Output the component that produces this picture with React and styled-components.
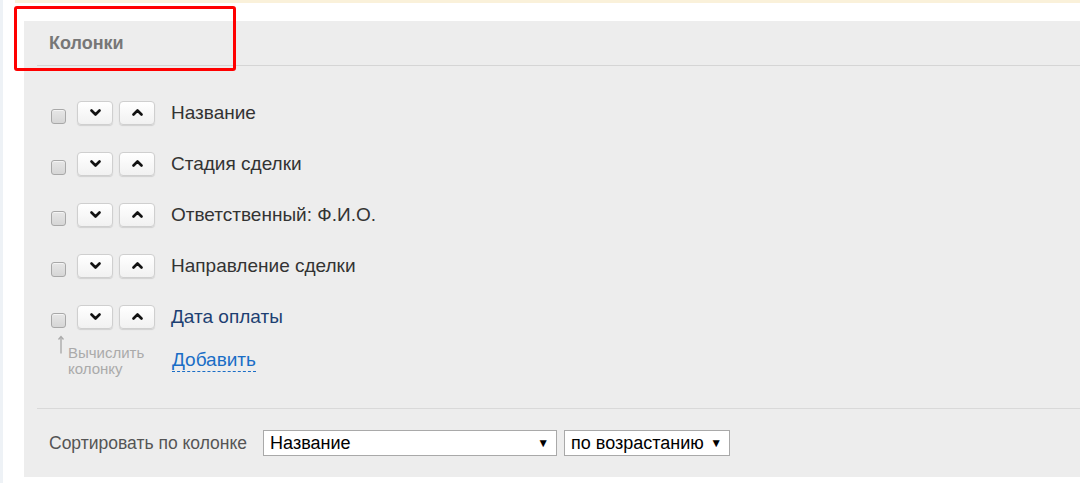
import styled, { createGlobalStyle } from "styled-components";

const GlobalStyle = createGlobalStyle`
  html, body {
    margin: 0;
    padding: 0;
    background: #fff;
    font-family: "Liberation Sans", Arial, sans-serif;
  }
`;

const columns = [
  { title: "Название" },
  { title: "Стадия сделки" },
  { title: "Ответственный: Ф.И.О." },
  { title: "Направление сделки" },
  { title: "Дата оплаты", custom: true },
];

function Chevron({ up }) {
  return (
    <svg width="11" height="7" viewBox="0 0 11 7">
      <polyline
        points={up ? "1.5,5.5 5.5,1.5 9.5,5.5" : "1.5,1.5 5.5,5.5 9.5,1.5"}
        fill="none"
        stroke="#111"
        strokeWidth="2.6"
        strokeLinecap="round"
        strokeLinejoin="round"
      />
    </svg>
  );
}

export default function App() {
  return (
    <Page>
      <GlobalStyle />
      <LeftStrip />
      <Main>
        <NoticeBand />
        <Panel>
          <Header>Колонки</Header>
          <Rows>
            {columns.map((c) => (
              <Row key={c.title}>
                <Check />
                <MoveButton>
                  <Chevron />
                </MoveButton>
                <MoveButton>
                  <Chevron up />
                </MoveButton>
                <ColumnTitle $custom={c.custom}>{c.title}</ColumnTitle>
              </Row>
            ))}
            <Extra>
              <CalcHint>
                <svg width="8" height="19" viewBox="0 0 8 19">
                  <path d="M4 2 V18.5" stroke="#aaa" strokeWidth="1.4" fill="none" />
                  <path d="M1.5 4.5 L4 1.5 L6.5 4.5" stroke="#aaa" strokeWidth="1.3" fill="none" />
                </svg>
                <HintText>
                  Вычислить
                  <br />
                  колонку
                </HintText>
              </CalcHint>
              <AddLink>Добавить</AddLink>
            </Extra>
          </Rows>
          <SortRow>
            <SortLabel>Сортировать по колонке</SortLabel>
            <Select $w={294}>
              <span>Название</span>
              <Arrow>▼</Arrow>
            </Select>
            <Select $w={166}>
              <span>по возрастанию</span>
              <Arrow>▼</Arrow>
            </Select>
          </SortRow>
        </Panel>
      </Main>
      <Annotation />
    </Page>
  );
}

const Page = styled.div`
  position: relative;
  display: flex;
  width: 1080px;
  height: 483px;
  overflow: hidden;
`;

const LeftStrip = styled.div`
  width: 3px;
  flex-shrink: 0;
  background: #eef2f6;
`;

const Main = styled.div`
  flex: 1;
  display: flex;
  flex-direction: column;
`;

const NoticeBand = styled.div`
  height: 3px;
  margin-left: 12px;
  background: #faf1da;
`;

const Panel = styled.div`
  margin: 18px 0 0 21px;
  height: 456px;
  background: #ededed;
  padding-left: 13px;
  display: flex;
  flex-direction: column;
`;

const Header = styled.div`
  height: 45px;
  padding: 1px 0 0 12px;
  box-sizing: border-box;
  border-bottom: 1px solid #d5d5d5;
  display: flex;
  align-items: center;
  font-size: 18px;
  font-weight: bold;
  color: #777;
`;

const Rows = styled.div`
  padding: 21px 0 0 14px;
  border-bottom: 1px solid #d9d9d9;
`;

const Row = styled.div`
  height: 51px;
  display: flex;
  align-items: center;
`;

const Check = styled.span`
  width: 13px;
  height: 13px;
  margin: 8px 11px 0 0;
  border: 1px solid #a8a8a8;
  border-radius: 3px;
  background: linear-gradient(#e6e6e6, #d6d6d6);
  box-shadow: inset 0 1px 0 #f4f4f4;
`;

const MoveButton = styled.span`
  width: 34px;
  height: 22px;
  margin-right: 6px;
  border: 1px solid #cfcfcf;
  border-radius: 4px;
  background: linear-gradient(#ffffff, #f1f1f1);
  box-shadow: 0 1px 1px rgba(0, 0, 0, 0.12);
  display: flex;
  align-items: center;
  justify-content: center;

  & + & {
    margin-right: 16px;
  }
`;

const ColumnTitle = styled.span`
  font-size: 19px;
  color: ${(p) => (p.$custom ? "#1d3f72" : "#333")};
`;

const Extra = styled.div`
  margin-top: -7px;
  height: 73px;
  display: flex;
  align-items: flex-start;
`;

const CalcHint = styled.div`
  box-sizing: border-box;
  width: 121px;
  padding-left: 6px;
  display: flex;
  align-items: flex-start;
  gap: 3px;
`;

const HintText = styled.div`
  margin-top: 10px;
  font-size: 15px;
  line-height: 16px;
  color: #aaa;
`;

const AddLink = styled.span`
  margin-top: 14px;
  font-size: 19px;
  line-height: 22px;
  color: #1a6dc6;
  border-bottom: 1px dashed #1a6dc6;
`;

const SortRow = styled.div`
  flex: 1;
  padding: 0 0 0 12px;
  display: flex;
  align-items: center;
  gap: 7px;
`;

const SortLabel = styled.span`
  font-size: 17.5px;
  color: #555;
  margin-right: 9px;
`;

const Select = styled.div`
  box-sizing: border-box;
  width: ${(p) => p.$w}px;
  height: 26px;
  padding: 0 7px 0 6px;
  background: #fff;
  border: 1px solid #a9a9a9;
  display: flex;
  align-items: center;
  justify-content: space-between;
  font-size: 18px;
  color: #000;
`;

const Arrow = styled.span`
  font-size: 12px;
`;

const Annotation = styled.div`
  position: absolute;
  left: 14px;
  top: 6px;
  width: 216px;
  height: 59px;
  border: 3px solid #ff0000;
  border-radius: 3px;
`;
